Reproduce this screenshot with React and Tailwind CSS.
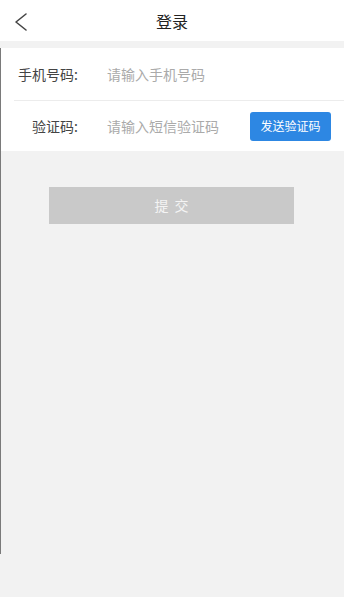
const font = { fontFamily: '"Noto Sans CJK SC", "Noto Sans", sans-serif' };

export default function App() {
  return (
    <div className="w-[344px] h-[597px] bg-[#f2f2f2] flex flex-col overflow-hidden" style={font}>
      {/* header */}
      <div className="h-[41px] bg-white flex items-center relative shrink-0">
        <svg className="absolute left-[12px] top-[11px]" width="18" height="22" viewBox="0 0 18 22" fill="none">
          <polyline points="14,3 4,11 14,19" stroke="#444" strokeWidth="1.6" strokeLinecap="round" strokeLinejoin="round" />
        </svg>
        <div className="flex-1 text-center text-[16px] text-[#222]">登录</div>
      </div>

      <div className="flex-1 flex flex-col mt-[7px]">
        <div className="h-[506px] border-l border-[#7a7a7a] flex flex-col">
          {/* form */}
          <div className="bg-white">
            <div className="h-[52px] flex items-center">
              <div className="w-[77px] text-right text-[14px] text-[#444]">手机号码:</div>
              <div className="ml-[29px] text-[14px] text-[#aaa]">请输入手机号码</div>
            </div>
            <div className="ml-[13px] h-px bg-[#ececec]" />
            <div className="h-[50px] flex items-center">
              <div className="w-[77px] text-right text-[14px] text-[#444]">验证码:</div>
              <div className="ml-[29px] flex-1 text-[14px] text-[#aaa]">请输入短信验证码</div>
              <button className="mr-[13px] w-[81px] h-[29px] rounded-[3px] bg-[#2d87e3] text-white text-[12px]">
                发送验证码
              </button>
            </div>
          </div>

          {/* submit */}
          <div className="mt-[36px] flex">
            <button className="ml-[48px] w-[245px] h-[37px] bg-[#c9c9c9] text-[#f4f4f4] text-[14px] tracking-[6px] pl-[6px]">
              提交
            </button>
          </div>
        </div>
      </div>
    </div>
  );
}
